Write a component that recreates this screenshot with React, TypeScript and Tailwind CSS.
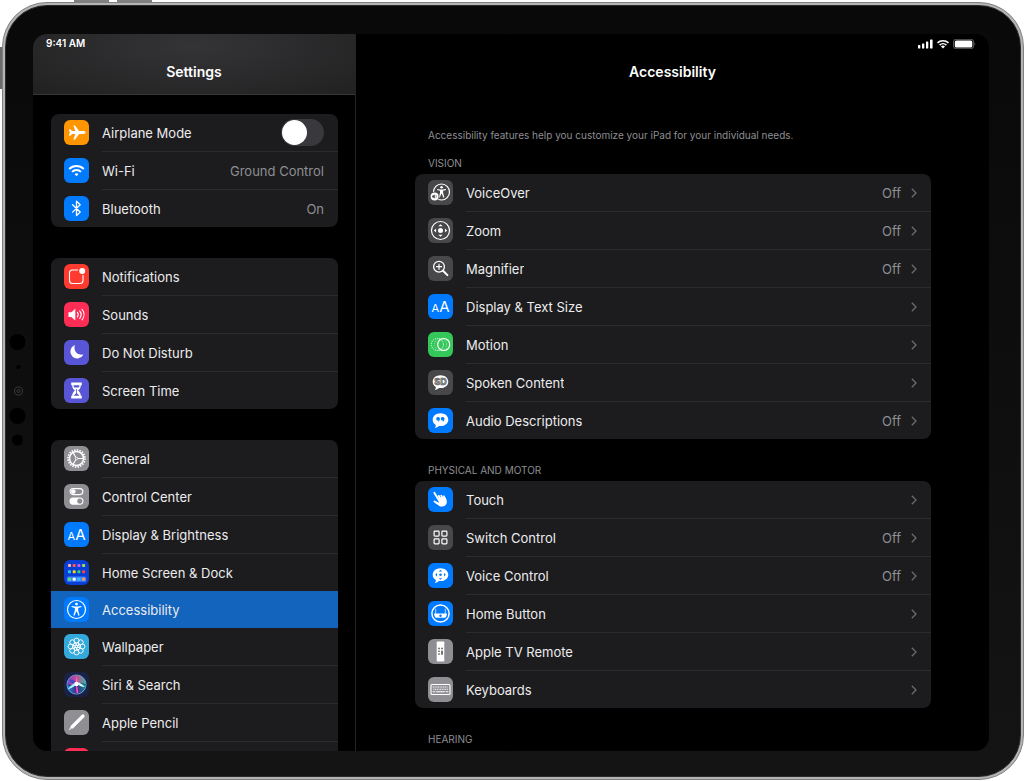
import { type ReactNode } from "react";
import clsx from "clsx";

type Row = {
  label?: string;
  value?: string;
  tile: string;
  icon: ReactNode;
  active?: boolean;
  toggle?: boolean;
};

const BLUE = "bg-[#007aff]";
const GRAY = "bg-[#8e8e93]";
const DARK = "bg-[#48484a]";
const INDIGO = "bg-[#5856d6]";

/* ---------- Glyphs, all on a 25 x 25 grid ---------- */

const airplane = (
  <path
    fill="#fff"
    d="M21.6 12.5c0-.8-1-1.4-2.3-1.4h-4.2L11 5.6H9.3l2.1 5.5H8L6.3 9.2H4.9l.9 3.3-.9 3.3h1.4L8 13.9h3.4l-2.1 5.5H11l4.1-5.5h4.2c1.3 0 2.3-.6 2.3-1.4z"
  />
);

const wifi = (
  <g fill="none" stroke="#fff" strokeWidth="1.9">
    <path d="M5.2 11a10.4 10.4 0 0 1 14.6 0" />
    <path d="M8 13.9a6.4 6.4 0 0 1 9 0" />
    <path d="M12.5 18.2l-2-2.1a2.9 2.9 0 0 1 4 0z" fill="#fff" stroke="none" />
  </g>
);

const bluetooth = (
  <path
    d="M8.6 8.7l7.6 7.3-3.7 3.6V5.2l3.7 3.6-7.6 7.3"
    fill="none"
    stroke="#fff"
    strokeWidth="1.3"
    strokeLinejoin="round"
    strokeLinecap="round"
  />
);

const notifications = (
  <>
    <path
      d="M14 6H8.5A3 3 0 0 0 5.5 9v7.500a3 3 0 0 0 3 3H16a3 3 0 0 0 3-3V11"
      fill="none"
      stroke="#fff"
      strokeWidth="1.1"
    />
    <circle cx="18.2" cy="7" r="3" fill="#fff" />
  </>
);

const sounds = (
  <>
    <path d="M4.500 10.200h2.800l4-3.500v11.800l-4-3.500H4.500z" fill="#fff" />
    <g fill="none" stroke="#fff" strokeWidth="1.1" strokeLinecap="round">
      <path d="M13.4 10.400a3.600 3.600 0 0 1 0 4.400" />
      <path d="M15.700 8.900a6 6 0 0 1 0 7.400" />
      <path d="M18.100 7.300a8.500 8.500 0 0 1 0 10.600" />
    </g>
  </>
);

const moon = (
  <path
    fill="#fff"
    d="M10.300 5.300a6.900 6.900 0 1 0 8.900 9.700.3.300 0 0 0-.4-.4 7 7 0 0 1-8-9 .3.300 0 0 0-.5-.3z"
  />
);

const hourglass = (
  <>
    <path
      fill="#fff"
      d="M7.200 4.600h10.600v2.600h-1c0 2.600-1.200 4-2.700 5.300 1.500 1.300 2.700 2.700 2.700 5.300h1v2.600H7.200v-2.600h1c0-2.600 1.200-4 2.700-5.300-1.500-1.300-2.700-2.700-2.700-5.300h-1z"
    />
    <path fill="#5856d6" d="M9.600 7.200h5.800c0 .9-.2 1.600-.5 2.200h-4.800c-.3-.6-.5-1.300-.5-2.200zM12.100 11h.8v4.200l2.500 2.600H9.600l2.500-2.600z" />
  </>
);

const gear = (
  <g fill="none" stroke="#fff">
    <circle cx="12.5" cy="12.5" r="8.500" strokeWidth="1.700" strokeDasharray="1.500 1.170" />
    <circle cx="12.5" cy="12.5" r="7" strokeWidth="1.500" />
    <circle cx="12.5" cy="12.5" r="1.200" strokeWidth=".9" />
    <path d="M14 12.500h5M11.800 11.200L9.200 6.900M11.800 13.800l-2.600 4.300" strokeWidth="1.100" />
  </g>
);

const controlCenter = (
  <>
    <rect x="6.1" y="4.6" width="12.8" height="6" rx="3" fill="none" stroke="#fff" strokeWidth="1.1" />
    <circle cx="9.3" cy="7.6" r="2.3" fill="#fff" />
    <rect x="5.5" y="13.5" width="14" height="7.2" rx="3.6" fill="#fff" />
    <circle cx="15.8" cy="17.1" r="2.6" fill="#8e8e93" />
  </>
);

const textSize = (
  <g fill="#fff" className="font-['Inter',sans-serif]">
    <text x="3.6" y="18" fontSize="11">A</text>
    <text x="11.2" y="18" fontSize="15">A</text>
  </g>
);

const homeScreenDots = [
  ["#ffb0a8", "#ff5a4d", "#c55cf0", "#a4e34c"],
  ["#31c4f3", "#ffd60a", "#35d17c", "#ff4538"],
  ["#61e05c", "#fff", "#31c4f3", "#ff9a4d"],
];

const homeScreen = (
  <>
    <rect x="2.8" y="16.6" width="19.4" height="5.2" rx="1.5" fill="#3f83ff" />
    {homeScreenDots.map((line, y) =>
      line.map((fill, x) => (
        <rect key={`${x}${y}`} x={4 + x * 4.7} y={[4, 10.2, 17.7][y]} width="3" height="3" rx=".8" fill={fill} />
      ))
    )}
  </>
);

const figure = (
  <>
    <circle cx="12.5" cy="7.1" r="1.4" fill="#fff" />
    <path
      fill="#fff"
      d="M7.700 9.100l3.400.5h2.800l3.400-.5.200 1-3.300.9v2.400l1.400 4.900-1.100.4-1.700-4.300h-.6l-1.700 4.300-1.100-.4 1.400-4.900V11l-3.300-.9z"
    />
  </>
);

const accessibility = (
  <>
    <circle cx="12.5" cy="12.5" r="9" fill="none" stroke="#fff" strokeWidth="1.2" />
    {figure}
  </>
);

const wallpaper = (
  <g fill="none" stroke="#fff" strokeWidth=".9">
    {[0, 45, 90, 135, 180, 225, 270, 315].map((deg) => (
      <circle key={deg} cx="12.5" cy="6.6" r="2.5" transform={`rotate(${deg} 12.5 12.5)`} />
    ))}
    {[22, 82, 142, 202, 262, 322].map((deg) => (
      <circle key={deg} cx="12.5" cy="10" r="1.5" transform={`rotate(${deg} 12.5 12.5)`} />
    ))}
  </g>
);

const siri = (
  <>
    <defs>
      <linearGradient id="siriTop" x1="0" y1="0" x2="1" y2="0">
        <stop offset="0" stopColor="#7a4df0" />
        <stop offset=".5" stopColor="#f0509f" />
        <stop offset="1" stopColor="#39d0ad" />
      </linearGradient>
      <linearGradient id="siriBottom" x1="0" y1="0" x2="1" y2="0">
        <stop offset="0" stopColor="#1a9fe8" />
        <stop offset=".5" stopColor="#4a2c9c" />
        <stop offset="1" stopColor="#139b96" />
      </linearGradient>
    </defs>
    <circle cx="12.5" cy="12.5" r="9.8" fill="#182048" />
    <path d="M3 12.500a9.500 9.500 0 0 1 19 0q-5-2-9.500-.5T3 12.500z" fill="url(#siriTop)" opacity=".85" />
    <path d="M3 13q5 2 9.500-1T22 13a9.500 9.500 0 0 1-19 0z" fill="url(#siriBottom)" opacity=".85" />
    <path d="M5 8q5-2 8 4-6 0-8-4z" fill="#2b48ca" opacity=".8" />
    <path d="M12 12q2.500 4 2.300 9.500l-2-1z" fill="#ff4fb0" />
    <path d="M3.500 17.500q4-5.500 9-7 0 4-9 7z" fill="#a0f3ff" />
    <path d="M12 10q5 .5 9 5-6 0-9-5z" fill="#c8fff0" />
    <path d="M12.500 4l1.200 7.500-2 .5z" fill="#ff71aa" />
    <circle cx="12.5" cy="12" r="2.2" fill="#fff" />
    <circle cx="12.5" cy="12.5" r="9.6" fill="none" stroke="#6fbfe6" strokeWidth=".7" />
  </>
);

const pencil = (
  <>
    <path d="M8.500 16.500L19 6" stroke="#fff" strokeWidth="3.2" strokeLinecap="round" />
    <path d="M7 15.700L4.700 20.300l4.600-2.300z" fill="#fff" />
    <path d="M6 17.500l1.500 1.500" stroke="#8e8e93" strokeWidth=".7" />
  </>
);

const voiceOver = (
  <>
    <g transform="translate(1 -.5)">
      <circle cx="12.5" cy="12.5" r="8" fill="none" stroke="#fff" strokeWidth="1.2" />
      <g transform="translate(1.3 1.3) scale(.9)">{figure}</g>
    </g>
    <circle cx="6.6" cy="16.5" r="4.8" fill="#48484a" />
    <circle cx="6.6" cy="16.5" r="4" fill="#fff" />
    <path d="M4.200 15.600h1l1.600-1.200v4.200l-1.600-1.200h-1z" fill="#48484a" />
    <path d="M7.900 15.200q.9 1.300 0 2.600" fill="none" stroke="#48484a" strokeWidth=".6" />
  </>
);

const fourArrows = (
  <path d="M12.500 6.200l2.200 2.100h-4.400zM12.500 18.800l2.200-2.100h-4.400zM5.900 12.500l2.200-2.100v4.200zM19.100 12.500l-2.200-2.100v4.200z" />
);

const zoom = (
  <g fill="#fff">
    <circle cx="12.5" cy="12.5" r="9" fill="none" stroke="#fff" strokeWidth="1.2" />
    <circle cx="12.5" cy="12.5" r="2.5" />
    {fourArrows}
  </g>
);

const magnifier = (
  <g fill="none" stroke="#fff">
    <circle cx="11" cy="10.7" r="5.4" strokeWidth="1.3" />
    <path d="M8 10.700h6M11 7.700v6" strokeWidth="1.2" />
    <path d="M15 14.700l4.400 4.400" strokeWidth="2" strokeLinecap="round" />
  </g>
);

const motion = (
  <g fill="none" stroke="#fff">
    <circle cx="9.4" cy="12.5" r="6" strokeWidth="1" strokeDasharray="1 1.09" />
    <circle cx="12.6" cy="12.5" r="6" strokeWidth=".7" strokeDasharray="1 1.09" opacity=".7" />
    <circle cx="15.7" cy="12.5" r="6" strokeWidth="1.2" />
  </g>
);

const bubble = (
  <path
    fill="#fff"
    d="M12.500 5.200c-4.400 0-7.800 2.800-7.800 6.500 0 2.300 1.200 4.200 3.100 5.300.1 1.100-.4 2.300-1.100 3 1.700-.2 3.200-1 4.200-2l1.600.1c4.400 0 7.800-2.700 7.800-6.400s-3.400-6.500-7.800-6.500z"
  />
);

const spoken = (
  <>
    {bubble}
    <text
      x="12.5"
      y="15"
      fontSize="9"
      fontWeight="700"
      textAnchor="middle"
      fill="#b4b4b6"
      stroke="#48484a"
      strokeWidth=".6"
      className="font-['Inter',sans-serif]"
    >
      SD
    </text>
  </>
);

const audioDescriptions = (
  <>
    {bubble}
    <g fill="#007aff">
      <path d="M10.100 9a1.700 1.700 0 1 0 .4 3.300c0 1-.6 1.600-1.300 2 1.600-.3 2.700-1.600 2.700-3.500 0-1.100-.7-1.800-1.800-1.800z" />
      <path d="M14.700 9a1.700 1.700 0 1 0 .4 3.300c0 1-.6 1.600-1.300 2 1.600-.3 2.700-1.600 2.700-3.500 0-1.100-.7-1.800-1.800-1.800z" />
    </g>
  </>
);

const touch = (
  <>
    <g fill="none" stroke="#fff" strokeLinecap="round">
      <path d="M6.300 5.700l4.600 7.600" strokeWidth="1.900" />
      <path d="M10.700 8.800l2 3.700M13.300 8.600l1.600 3.500M15.900 9.300l1.500 3.300" strokeWidth="1.800" />
      <path d="M6.500 14.500l5 2.600" strokeWidth="1.900" />
    </g>
    <path
      fill="#fff"
      d="M9.600 11.800l1.300-1.200 6-.4 1.300 2c1.100 2.500.9 4.900-1.100 6.400-1.900 1.400-4.400 1.300-6.500-.2l-4.300-3 4.800.600z"
    />
  </>
);

const switchControl = (
  <g fill="none" stroke="#fff" strokeWidth="1.2">
    <rect x="6.1" y="6.1" width="5" height="5" rx=".8" />
    <rect x="13.9" y="6.1" width="5" height="5" rx=".8" />
    <rect x="6.1" y="13.9" width="5" height="5" rx=".8" />
    <rect x="13.9" y="13.9" width="5" height="5" rx=".8" />
  </g>
);

const voiceControl = (
  <>
    {bubble}
    <g fill="#007aff" transform="translate(2.5 1.8) scale(.8)">
      {fourArrows}
      <circle cx="12.5" cy="12.5" r="1.6" />
    </g>
  </>
);

const homeButton = (
  <>
    <circle cx="12.5" cy="12.5" r="8.6" fill="none" stroke="#fff" strokeWidth="1.500" />
    <path d="M7.700 7.700v5.100M17.300 7.700v5.100" stroke="#fff" strokeWidth=".7" />
    <path d="M6 12.600h13a6.800 6.800 0 0 1-1.600 4.200H7.600A6.800 6.800 0 0 1 6 12.600z" fill="#fff" />
    <circle cx="12.5" cy="14.7" r="1.2" fill="#007aff" />
  </>
);

const remote = (
  <>
    <rect x="8.7" y="2.5" width="7.6" height="20" rx=".8" fill="#fff" />
    <g fill="#666668">
      <circle cx="11" cy="9.5" r=".9" />
      <circle cx="14" cy="9.5" r=".9" />
      <circle cx="11" cy="12.3" r=".9" />
      <circle cx="11" cy="15.1" r=".9" />
      <rect x="13.1" y="11.5" width="1.8" height="4.5" rx=".9" />
    </g>
  </>
);

const keyboard = (
  <g fill="none" stroke="#fff">
    <rect x="3" y="7.5" width="19" height="10" rx="1" strokeWidth="1.1" />
    <path d="M4.800 10h15.400M5.300 12.300h14.600" strokeWidth="1.1" strokeDasharray="1.1 .6" />
    <path d="M4.800 14.800h2.500M8.200 14.800h8.600M17.700 14.800h2.500" strokeWidth="1.1" />
  </g>
);

/* ---------- Data ---------- */

const sidebarGroups: Row[][] = [
  [
    { label: "Airplane Mode", tile: "bg-[#ff9500]", icon: airplane, toggle: true },
    { label: "Wi-Fi", value: "Ground Control", tile: BLUE, icon: wifi },
    { label: "Bluetooth", value: "On", tile: BLUE, icon: bluetooth },
  ],
  [
    { label: "Notifications", tile: "bg-[#ff3b30]", icon: notifications },
    { label: "Sounds", tile: "bg-[#ff2d55]", icon: sounds },
    { label: "Do Not Disturb", tile: INDIGO, icon: moon },
    { label: "Screen Time", tile: INDIGO, icon: hourglass },
  ],
  [
    { label: "General", tile: GRAY, icon: gear },
    { label: "Control Center", tile: GRAY, icon: controlCenter },
    { label: "Display & Brightness", tile: BLUE, icon: textSize },
    { label: "Home Screen & Dock", tile: "bg-[#0a3fd6]", icon: homeScreen },
    { label: "Accessibility", tile: BLUE, icon: accessibility, active: true },
    { label: "Wallpaper", tile: "bg-[#34aadc]", icon: wallpaper },
    { label: "Siri & Search", tile: "bg-[#1b2145]", icon: siri },
    { label: "Apple Pencil", tile: GRAY, icon: pencil },
    { tile: "bg-[#ff2d55]", icon: null },
  ],
];

const vision: Row[] = [
  { label: "VoiceOver", value: "Off", tile: DARK, icon: voiceOver },
  { label: "Zoom", value: "Off", tile: DARK, icon: zoom },
  { label: "Magnifier", value: "Off", tile: DARK, icon: magnifier },
  { label: "Display & Text Size", tile: BLUE, icon: textSize },
  { label: "Motion", tile: "bg-[#34c759]", icon: motion },
  { label: "Spoken Content", tile: DARK, icon: spoken },
  { label: "Audio Descriptions", value: "Off", tile: BLUE, icon: audioDescriptions },
];

const physical: Row[] = [
  { label: "Touch", tile: BLUE, icon: touch },
  { label: "Switch Control", value: "Off", tile: DARK, icon: switchControl },
  { label: "Voice Control", value: "Off", tile: BLUE, icon: voiceControl },
  { label: "Home Button", tile: BLUE, icon: homeButton },
  { label: "Apple TV Remote", tile: GRAY, icon: remote },
  { label: "Keyboards", tile: GRAY, icon: keyboard },
];

/* ---------- Pieces ---------- */

function Tile({ row }: { row: Row }) {
  return (
    <span className={clsx("block size-[25px] shrink-0 overflow-hidden rounded-md", row.tile)}>
      <svg viewBox="0 0 25 25" className="size-full" aria-hidden="true">
        {row.icon}
      </svg>
    </span>
  );
}

function Chevron() {
  return (
    <svg viewBox="0 0 6 10" className="ml-2.5 h-2.5 w-1.5 shrink-0" aria-hidden="true">
      <path d="M.8.8L5 5 .8 9.2" fill="none" stroke="#6c6c70" strokeWidth="1.3" />
    </svg>
  );
}

function RowItem({ row, divided, chevron }: { row: Row; divided: boolean; chevron?: boolean }) {
  const inner = (
    <>
      <span className={clsx("flex items-center", divided && "pt-px")}>
        <Tile row={row} />
      </span>
      <span
        className={clsx(
          "box-content flex h-[37px] min-w-0 flex-1 items-center justify-between pr-3.5",
          divided && "border-t border-[#2c2c2e]"
        )}
      >
        <span className="truncate text-[#ececee]">{row.label}</span>
        {row.toggle ? (
          <>
            <input id="airplane" type="checkbox" role="switch" className="peer sr-only" />
            <span className="flex h-[27px] w-[43px] items-center rounded-full bg-[#39393d] p-px peer-checked:justify-end peer-checked:bg-[#30d158]">
              <span className="size-[25px] rounded-full bg-white" />
            </span>
          </>
        ) : (
          <span className="flex items-center text-[#8e8e93]">
            {row.value}
            {chevron && <Chevron />}
          </span>
        )}
      </span>
    </>
  );

  const className = clsx("flex gap-[13px] pl-[13px]", row.active && "bg-[#1264bd]");
  return (
    <li>
      {row.toggle ? (
        <label htmlFor="airplane" className={clsx(className, "relative")}>
          {inner}
        </label>
      ) : (
        <a href="#" className={className} aria-current={row.active ? "page" : undefined}>
          {inner}
        </a>
      )}
    </li>
  );
}

function Group({ rows, chevron }: { rows: Row[]; chevron?: boolean }) {
  return (
    <ul className="overflow-hidden rounded-lg bg-[#1c1c1e]">
      {rows.map((row, i) => (
        <RowItem
          key={row.label ?? i}
          row={row}
          divided={i > 0 && !row.active && !rows[i - 1].active}
          chevron={chevron}
        />
      ))}
    </ul>
  );
}

function SectionTitle({ children }: { children: ReactNode }) {
  return <h2 className="px-[13px] text-[10px] leading-4 text-[#8e8e93]">{children}</h2>;
}

function StatusIcons() {
  return (
    <svg viewBox="0 0 58 10" className="h-2.5 w-[58px]" aria-hidden="true">
      <g fill="#fff">
        <rect x="0" y="6" width="2.3" height="3.5" rx=".6" />
        <rect x="4" y="4.5" width="2.3" height="5" rx=".6" />
        <rect x="8" y="2.5" width="2.3" height="7" rx=".6" />
        <rect x="12" y=".5" width="2.6" height="9" rx=".6" />
        <path d="M25 9.500l-2-2a2.900 2.900 0 0 1 4 0z" />
        <rect x="36.8" y="1.5" width="17.5" height="7" rx="1.5" />
        <path d="M56.600 3.500q1.400 1.500 0 3z" opacity=".5" />
      </g>
      <g fill="none" stroke="#fff" strokeWidth="1.5">
        <path d="M19.500 3.900a7.800 7.800 0 0 1 11 0" />
        <path d="M21.600 6.100a4.900 4.900 0 0 1 6.800 0" />
      </g>
      <rect x="35.5" y=".3" width="20.2" height="9.4" rx="2.6" fill="none" stroke="#fff" strokeWidth=".7" opacity=".5" />
    </svg>
  );
}

function Sensors() {
  return (
    <svg viewBox="0 0 20 120" className="absolute top-1/2 left-px h-[120px] w-5 -translate-y-1/2" aria-hidden="true">
      <circle cx="10.5" cy="11" r="8" fill="#000" />
      <circle cx="11.5" cy="36" r="2" fill="#000" />
      <circle cx="11.5" cy="60" r="4" fill="#0a0a0a" stroke="#363636" strokeWidth="1.2" />
      <circle cx="11.5" cy="60" r="1.6" fill="#111" stroke="#454545" strokeWidth=".8" />
      <circle cx="10.5" cy="85" r="8" fill="#000" />
      <circle cx="10.5" cy="109" r="5.5" fill="#000" />
    </svg>
  );
}

export default function App() {
  return (
    <div className="relative h-screen bg-white pt-0.5 pb-px pl-0.5 font-['Inter',sans-serif] text-[13px] leading-5">
      {/* Hardware buttons */}
      <span className="absolute top-0 left-[74px] h-1 w-[35px] bg-[#808080]" />
      <span className="absolute top-0 left-[117px] h-1 w-[35px] bg-[#808080]" />
      <span className="absolute top-[47px] left-0 h-[42px] w-1 bg-[#6c6c6c]" />

      {/* Metal edge and bezel */}
      <div className="relative h-full rounded-[45px] border border-[#808080] bg-[#b4b4b4] p-0.5">
        <div className="relative h-full rounded-[42px] border border-[#2c2c2c] bg-linear-to-b from-[#090909] to-[#141414] pt-7 pr-[31px] pb-[25px] pl-[27px]">
          <Sensors />
          <div className="flex h-full overflow-hidden rounded-[14px] bg-black">
            {/* Sidebar */}
            <aside className="flex w-[323px] shrink-0 flex-col border-r border-[#242426]">
              <header className="h-[61px] shrink-0 border-b border-[#363638] bg-radial-[at_50%_20%] from-[#343436] to-[#212122] px-[13px] pt-px">
                <p className="text-[10px] leading-4 font-semibold text-white">9:41 AM</p>
                <h1 className="pt-[11px] text-center text-[14px] leading-5 font-semibold text-white">Settings</h1>
              </header>
              <nav className="flex min-h-0 flex-1 flex-col gap-[31px] overflow-y-auto pt-[19px] pr-[17px] pl-[18px] [scrollbar-width:none]">
                {sidebarGroups.map((rows, i) => (
                  <div key={i}>
                    <Group rows={rows} />
                  </div>
                ))}
              </nav>
            </aside>

            {/* Detail pane */}
            <main className="flex min-w-0 flex-1 flex-col">
              <header className="h-[61px] shrink-0 pt-px">
                <div className="flex h-4 items-center justify-end pt-0.5 pr-[13px]">
                  <StatusIcons />
                </div>
                <h1 className="pt-[11px] text-center text-[14px] leading-5 font-semibold text-white">Accessibility</h1>
              </header>
              <div className="min-h-0 flex-1 overflow-y-auto pt-8 pr-[58px] pl-[59px] [scrollbar-width:none]">
                <p className="px-[13px] pb-3 text-[10px] leading-4 text-[#8e8e93]">
                  Accessibility features help you customize your iPad for your individual needs.
                </p>
                <section className="flex flex-col gap-[3px] pb-[23px]">
                  <SectionTitle>VISION</SectionTitle>
                  <Group rows={vision} chevron />
                </section>
                <section className="flex flex-col gap-[3px] pb-[23px]">
                  <SectionTitle>PHYSICAL AND MOTOR</SectionTitle>
                  <Group rows={physical} chevron />
                </section>
                <section>
                  <SectionTitle>HEARING</SectionTitle>
                </section>
              </div>
            </main>
          </div>
        </div>
      </div>
    </div>
  );
}
